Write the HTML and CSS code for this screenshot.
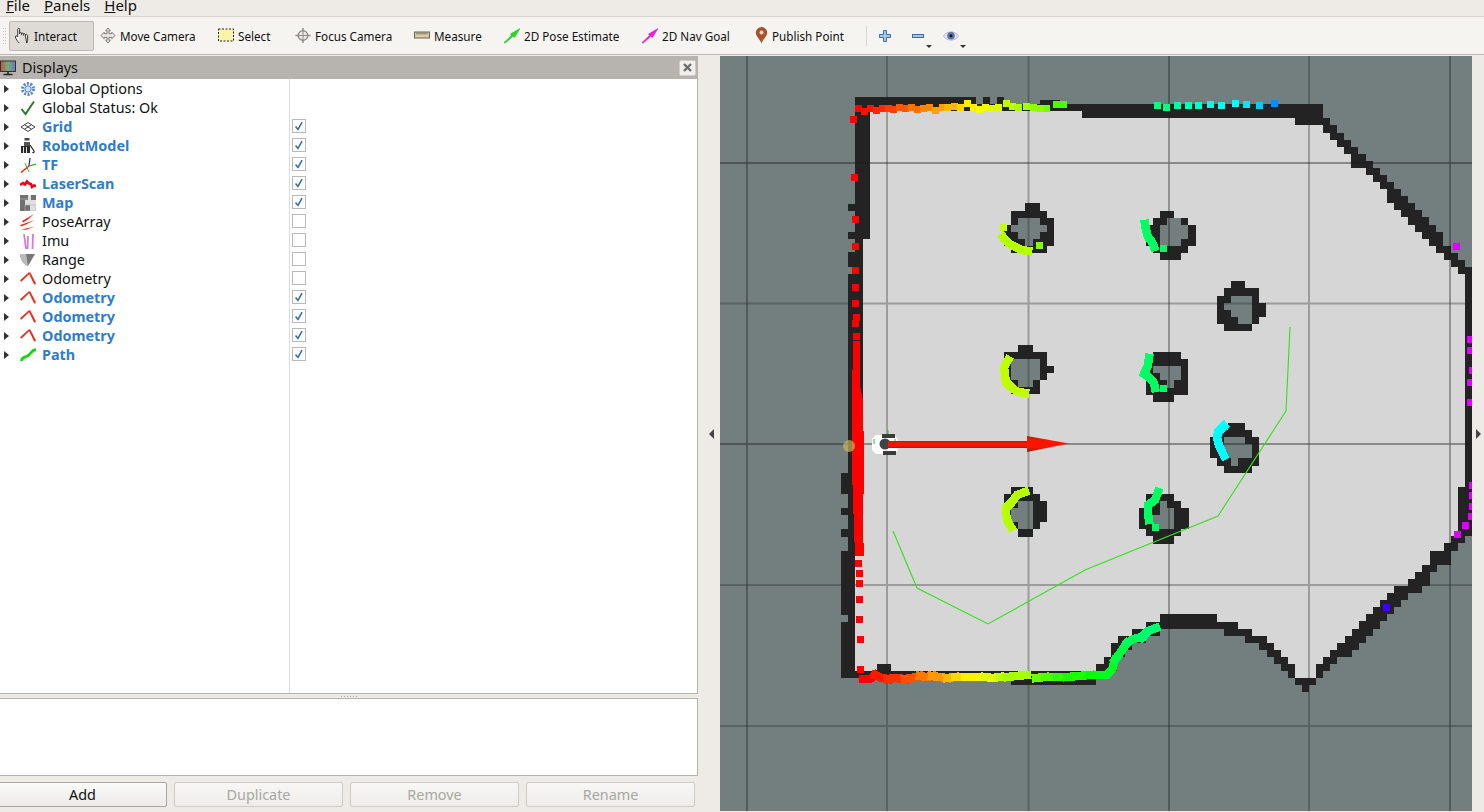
FILE: index.html
```html
<!DOCTYPE html>
<html lang="en">
<head>
<meta charset="utf-8">
<title>RViz</title>
<link rel="stylesheet" href="styles.css">
</head>
<body>
<svg class="defs" width="0" height="0">
  <defs>
    <symbol id="chk" viewBox="0 0 14 14"><path d="M3 7.500 5.800 11 10.600 2.600" fill="none" stroke="#2f6ea8" stroke-width="1.800"/></symbol>
    <symbol id="odom" viewBox="0 0 18 18"><path d="M0 10.500 10 1.500 10.500 3.500 1.500 12ZM9.500 2 11.500 1.500 18 14 16 15.500Z" fill="#e8301c"/></symbol>
    <linearGradient id="shaft" x1="0" y1="0" x2="0" y2="1"><stop offset="0" stop-color="#a82410"/><stop offset=".3" stop-color="#ff1400"/><stop offset=".7" stop-color="#ff1400"/><stop offset="1" stop-color="#8c2410"/></linearGradient>
    <linearGradient id="mon" x1="0" y1="0" x2="1" y2="0"><stop offset="0" stop-color="#c05050"/><stop offset=".5" stop-color="#70b070"/><stop offset="1" stop-color="#7070d0"/></linearGradient>
  </defs>
</svg>
<nav class="menubar"><span class="menu"><u>F</u>ile</span><span class="menu"><u>P</u>anels</span><span class="menu"><u>H</u>elp</span></nav>
<div class="toolbar">
  <div class="grip"></div>
  <div class="tool active t-interact">
    <svg class="ti" viewBox="0 0 16 18"><path d="M5 17C3.500 15 1.500 13 1 10.500 1 9 2.500 9 3.500 10.500V2.500C3.500 1 5.500 1 5.500 2.500V7.500M5.500 7C5.500 5.500 7.500 5.500 7.500 7V8.500M7.500 7.500C7.500 6 9.500 6 9.500 7.500V9M9.500 8C9.500 6.800 11.500 6.800 11.500 8V9M11.500 8.500C11.500 7.500 13.500 7.500 14 9V13C14 15 13.500 16 13 17Z" fill="#fff" stroke="#222" stroke-width="1"/></svg>
    <span>Interact</span>
  </div>
  <div class="tool t-move">
    <svg class="ti" viewBox="0 0 17 17"><path d="M8.500 .5 11 3.500H9.500V6.500H12.500V5L16 8.500 12.500 12V10.500H9.500V13.500H11L8.500 16.500 6 13.500H7.500V10.500H4.500V12L1 8.500 4.500 5V6.500H7.500V3.500H6Z" fill="#e9e7e3" stroke="#77736e"/></svg>
    <span>Move Camera</span>
  </div>
  <div class="tool t-select">
    <svg class="ti" viewBox="0 0 16 16"><rect x=".5" y="1.500" width="15" height="12" fill="#fbf3ab" stroke="#222" stroke-dasharray="2 1.500"/></svg>
    <span>Select</span>
  </div>
  <div class="tool t-focus">
    <svg class="ti" viewBox="0 0 17 17"><path d="M8.500 .5V16.500M.5 8.500H16.500" stroke="#8d8a85" stroke-width="1.500"/><circle cx="8.500" cy="8.500" r="5" fill="#eceae6" stroke="#8d8a85" stroke-width="1.500"/><path d="M8.500 4V13M4 8.500H13" stroke="#8d8a85"/></svg>
    <span>Focus Camera</span>
  </div>
  <div class="tool t-measure">
    <svg class="ti" viewBox="0 0 16 16"><rect x=".5" y="4.500" width="15" height="6" fill="#d9cf9d" stroke="#66635c"/><path d="M3 5V7M5 5V7M7 5V7M9 5V7M11 5V7M13 5V7" stroke="#66635c"/></svg>
    <span>Measure</span>
  </div>
  <div class="tool t-pose">
    <svg class="ti" viewBox="0 0 16 16"><path d="M0 15 7.500 8 6.500 6.500 16 1 10.500 10 9 8.800 1 15.800Z" fill="#1fe01f" stroke="#129612" stroke-width=".4"/></svg>
    <span>2D Pose Estimate</span>
  </div>
  <div class="tool t-nav">
    <svg class="ti" viewBox="0 0 16 16"><path d="M0 15 7.500 8 6.500 6.500 16 1 10.500 10 9 8.800 1 15.800Z" fill="#f01ee0" stroke="#a812a0" stroke-width=".4"/></svg>
    <span>2D Nav Goal</span>
  </div>
  <div class="tool t-point">
    <svg class="ti-pin" viewBox="0 0 13 17"><path d="M6.500 16.500C5 12 .8 9.500.8 5.800A5.700 5.700 0 0 1 12.200 5.800C12.200 9.500 8 12 6.500 16.500Z" fill="#a8512c"/><circle cx="6.500" cy="5.500" r="2" fill="#f3d9c8"/></svg>
    <span>Publish Point</span>
  </div>
  <div class="tsep"></div>
  <svg class="ticon i-plus" viewBox="0 0 12 12"><path d="M4.500.5H7.500V4.500H11.500V7.500H7.500V11.500H4.500V7.500H.5V4.500H4.500Z" fill="#a9c6e6" stroke="#3a6ea8"/></svg>
  <svg class="ticon i-minus" viewBox="0 0 12 12"><rect x=".5" y="4.500" width="11" height="3" fill="#a9c6e6" stroke="#3a6ea8"/></svg>
  <span class="drop d-minus"></span>
  <svg class="i-eye" viewBox="0 0 16 12"><path d="M.5 6C4 .5 12 .5 15.500 6 12 11.500 4 11.500 .5 6Z" fill="#e4e6ee" stroke="#b5b7c2"/><circle cx="8" cy="5.800" r="3.800" fill="#5f70b0"/><circle cx="8" cy="5.800" r="1.500" fill="#14162a"/></svg>
  <span class="drop d-eye"></span>
</div>
<main class="main">
  <section class="dock">
    <header class="dock-title">
      <svg class="mon" viewBox="0 0 16 16"><rect x=".5" y="1" width="15" height="10.500" fill="url(#mon)" stroke="#333"/><path d="M8 11.500V14M3.500 14.500H12.500" stroke="#222" stroke-width="1.500"/></svg>
      <span class="dock-name">Displays</span>
      <span class="dock-close"><svg viewBox="0 0 9 9"><path d="M1 1 8 8M8 1 1 8" stroke="#6e6c69" stroke-width="2.400"/></svg></span>
    </header>
    <div class="tree">
      <div class="names">
        <div class="row"><i class="tri"></i><svg class="ic" viewBox="0 0 16 16"><circle cx="8" cy="8" r="5.500" fill="none" stroke="#4f86cc" stroke-width="3" stroke-dasharray="2 1.450"/><circle cx="8" cy="8" r="3.200" fill="#cfe0f4" stroke="#4f86cc"/></svg><span>Global Options</span></div>
        <div class="row"><i class="tri"></i><svg class="ic" viewBox="0 0 16 16"><path d="M1.500 9 5.500 14 14 1.500" fill="none" stroke="#2b7a2b" stroke-width="2"/></svg><span>Global Status: Ok</span></div>
        <div class="row on"><i class="tri"></i><svg class="ic" viewBox="0 0 16 16"><path d="M8 3.500 15 8 8 12.500 1 8ZM4.500 5.700 11.500 10.200M11.500 5.700 4.500 10.200" fill="none" stroke="#444" stroke-width="1"/></svg><span>Grid</span></div>
        <div class="row on"><i class="tri"></i><svg class="ic" viewBox="0 0 16 16"><rect x="4.500" y="0" width="5" height="2.500" fill="#445"/><rect x="4" y="4" width="6" height="4" fill="#555"/><rect x="1" y="8" width="9" height="7" fill="#2a2a2a"/><path d="M10 7 14 13C14.500 15 13 15 12.500 14" fill="none" stroke="#333" stroke-width="1.300"/><path d="M3.500 9V15M6.500 9V15" stroke="#ddd"/></svg><span>RobotModel</span></div>
        <div class="row on"><i class="tri"></i><svg class="ic" viewBox="0 0 16 16"><path d="M9 9 10 1" stroke="#2222dd" stroke-width="1.300"/><path d="M9 9 16 7" stroke="#11bb11" stroke-width="1.300"/><path d="M9 9 1 15.500" stroke="#ee2211" stroke-width="1.500"/><path d="M5 6 9 15" stroke="#22bb22"/></svg><span>TF</span></div>
        <div class="row on"><i class="tri"></i><svg class="ic" viewBox="0 0 16 16"><path d="M0 9 3 7 5 8.500 7 5.500 9 7.500 11 8 12 11 14 9.500 16 10" fill="none" stroke="#f00010" stroke-width="2.600"/></svg><span>LaserScan</span></div>
        <div class="row on"><i class="tri"></i><svg class="ic" viewBox="0 0 16 16"><rect width="16" height="16" fill="#dedede"/><path d="M0 0H8V5H5V10H10V16H0ZM11 0H16V5H11Z" fill="#707070"/><path d="M5 10H16V16H5ZM0 4H8" fill="none" stroke="#bbb" stroke-width=".6"/></svg><span>Map</span></div>
        <div class="row"><i class="tri"></i><svg class="ic" viewBox="0 0 16 16"><path d="M2 7 14 0 8 5.500 3 8.500ZM0 11 15 6 6 10.500 1 12.500ZM1 15.500 15 12.500 6 15.800Z" fill="#ea2f18"/></svg><span>PoseArray</span></div>
        <div class="row"><i class="tri"></i><svg class="ic" viewBox="0 0 16 16"><path d="M4 1 6 16M8 3 7.500 16M13 1 12.500 16" fill="none" stroke="#d67ada" stroke-width="1.800"/></svg><span>Imu</span></div>
        <div class="row"><i class="tri"></i><svg class="ic" viewBox="0 0 16 16"><path d="M0 2H15L8 14C6 14 0 9 0 2Z" fill="#777"/><path d="M0 2H6L8 14C6 14 0 9 0 2Z" fill="#bbb"/></svg><span>Range</span></div>
        <div class="row"><i class="tri"></i><svg class="ic"><use href="#odom"/></svg><span>Odometry</span></div>
        <div class="row on"><i class="tri"></i><svg class="ic"><use href="#odom"/></svg><span>Odometry</span></div>
        <div class="row on"><i class="tri"></i><svg class="ic"><use href="#odom"/></svg><span>Odometry</span></div>
        <div class="row on"><i class="tri"></i><svg class="ic"><use href="#odom"/></svg><span>Odometry</span></div>
        <div class="row on"><i class="tri"></i><svg class="ic" viewBox="0 0 16 16"><path d="M1.500 14C2 9 6 11 9 8 11 6 12 3 16 2.500" fill="none" stroke="#10d810" stroke-width="2.800"/></svg><span>Path</span></div>
      </div>
      <div class="checks">
        <div class="crow"></div><div class="crow"></div>
        <div class="crow"><span class="box"><svg><use href="#chk"/></svg></span></div>
        <div class="crow"><span class="box"><svg><use href="#chk"/></svg></span></div>
        <div class="crow"><span class="box"><svg><use href="#chk"/></svg></span></div>
        <div class="crow"><span class="box"><svg><use href="#chk"/></svg></span></div>
        <div class="crow"><span class="box"><svg><use href="#chk"/></svg></span></div>
        <div class="crow"><span class="box"></span></div>
        <div class="crow"><span class="box"></span></div>
        <div class="crow"><span class="box"></span></div>
        <div class="crow"><span class="box"></span></div>
        <div class="crow"><span class="box"><svg><use href="#chk"/></svg></span></div>
        <div class="crow"><span class="box"><svg><use href="#chk"/></svg></span></div>
        <div class="crow"><span class="box"><svg><use href="#chk"/></svg></span></div>
        <div class="crow"><span class="box"><svg><use href="#chk"/></svg></span></div>
      </div>
    </div>
    <div class="splitter"><span class="dots"></span></div>
    <div class="helpbox"></div>
    <div class="buttons">
      <button class="btn">Add</button>
      <button class="btn" disabled>Duplicate</button>
      <button class="btn" disabled>Remove</button>
      <button class="btn" disabled>Rename</button>
    </div>
  </section>
  <div class="gutter"><i class="arrow-l"></i></div>
  <svg class="view" viewBox="720 56 752 755">
    <rect x="720" y="56" width="752" height="755" fill="#737f7f"/>
    <g class="cells">
      <path fill="#232323" d="M855 97H976V104H1323V118H1330V125H1337V133H1344V140H1351V147H1358V154H1366V161H1373V168H1380V175H1387V182H1394V189H1401V196H1408V203H1415V210H1422V217H1429V225H1436V232H1443V246H1451V253H1458V260H1465V267H1472V536H1465V543H1458V551H1451V565H1437V572H1430V586H1422V593H1408V600H1401V607H1394V614H1387V621H1380V629H1373V636H1366V643H1359V650H1352V657H1337V664H1330V671H1323V678H1316V685H1309V692H1302V685H1295V678H1288V671H1281V664H1274V657H1267V650H1259V643H1245V636H1224V629H1160V636H1146V643H1132V650H1125V657H1117V671H1110V678H1096V685H1011V678H841V622H848V615H841V551H848V537H841V529H848V515H841V508H848V494H841V473H848V274H855V267H848V252H855V239H848V232H855V211H848V204H855Z"/>
      <path fill="#d6d6d6" d="M870 111H1082V118H1295V125H1323V133H1330V140H1337V147H1344V154H1351V168H1366V175H1373V182H1380V189H1387V203H1394V210H1401V217H1408V225H1415V232H1422V239H1429V246H1436V253H1444V260H1451V267H1458V274H1465V482H1465V487H1458V536H1451V543H1444V551H1430V565H1422V572H1415V579H1408V586H1394V593H1387V600H1380V607H1373V614H1366V621H1359V629H1352V636H1345V643H1337V650H1330V657H1323V664H1316V678H1295V664H1288V657H1281V650H1274V643H1267V636H1252V629H1238V622H1217V614H1160V622H1146V629H1132V636H1118V643H1111V657H1104V664H1096V671H891V664H877V671H855V473H863V239H870Z"/>
      <path fill="#232323" d="M1295 111H1302V118H1295ZM1302 118H1309V125H1302Z"/>
      <path fill="#232323" d="M983 97H990V104H983ZM997 97H1004V104H997ZM1040 100H1060V104H1040Z"/>
      <!-- pillars -->
      <path fill="#232323" d="M1025 203H1040V211H1047V218H1054V246H1047V253H1011V246H1004V225H1011V211H1025Z"/>
      <path fill="#737f7f" d="M1018 218H1040V225H1047V232H1040V239H1033V246H1025V239H1018V232H1011V225H1018Z"/>
      <path fill="#232323" d="M1160 211H1174V218H1188V225H1196V246H1188V253H1181V260H1160V253H1153V246H1146V225H1153V218H1160Z"/>
      <path fill="#737f7f" d="M1167 218H1181V225H1188V239H1181V246H1160V225H1167Z"/>
      <path fill="#232323" d="M1231 281H1245V288H1259V303H1266V317H1259V324H1252V331H1224V324H1217V296H1224V288H1231Z"/>
      <path fill="#737f7f" d="M1231 296H1252V324H1238V317H1231V310H1224V303H1231Z"/>
      <path fill="#232323" d="M1018 345H1033V352H1047V366H1054V373H1047V380H1040V394H1011V387H1004V352H1018Z"/>
      <path fill="#737f7f" d="M1011 359H1040V380H1033V387H1018V380H1011Z"/>
      <path fill="#232323" d="M1153 352H1181V359H1188V395H1174V402H1153V395H1146V359H1153Z"/>
      <path fill="#737f7f" d="M1153 366H1181V380H1174V388H1167V380H1160V373H1153Z"/>
      <path fill="#232323" d="M1228 423H1245V430H1252V437H1259V466H1252V473H1224V466H1217V458H1210V437H1217V430H1228Z"/>
      <path fill="#737f7f" d="M1224 437H1245V444H1252V458H1238V466H1231V458H1224Z"/>
      <path fill="#232323" d="M1011 487H1033V494H1040V501H1047V522H1040V529H1033V537H1018V529H1011V522H1004V494H1011Z"/>
      <path fill="#737f7f" d="M1018 501H1033V529H1018V522H1011V508H1018Z"/>
      <path fill="#232323" d="M1146 494H1174V501H1181V508H1189V529H1181V536H1174V544H1153V536H1146V529H1139V508H1146Z"/>
      <path fill="#737f7f" d="M1160 501H1167V508H1174V529H1153V515H1160Z"/>
    </g>
    <g class="gridlines">
      <path class="g1" d="M747 56V811M1169 56V811M1450 56V811M720 163H1472M720 444H1472"/>
      <path class="g2" d="M887 56V811M1028.500 56V811M1309 56V811M720 303.500H1472M720 585H1472M720 726H1472"/>
    </g>
    <path class="route" d="M893 531 917 588 988 624 1085 570 1218 516 1286 411 1290 327"/>
    <!-- robot -->
    <path fill="#fff" d="M876 435H894L898 439V450L894 454H876L872 450V439Z"/>
    <path fill="#3c3c3c" d="M882 434H895V438H882ZM883 451H896V455H883Z"/>
    <circle cx="885" cy="444" r="5.500" fill="#3e4345"/>
    <path class="tick" d="M874 439V444M895 439V444M888 430V434"/>
    <!-- laser -->
    <g class="scan">
      <path class="wallred" d="M853 341H860V385L863 400 864 460 863 530 864 556H855L853 500 852 470 852 400Z"/>
      <path stroke="#ff0000" d="M853 119h.01M854 177h.01M855 219h.01M855 246h.01M855 270h.01M855 287h.01M855 303h.01M856 317h.01M855 323h.01M856 336h.01M858 563h.01M859 573h.01M859 583h.01M859 599h.01M859 619h.01M860 639h.01M860 669h.01M858 108h.01"/>
      <path stroke="#ff1000" d="M864 111h.01M870 108h.01"/><path stroke="#ff2800" d="M876 110h.01M882 108h.01"/><path stroke="#ff4000" d="M888 108h.01M893 109h.01"/><path stroke="#ff5800" d="M899 107h.01M905 108h.01"/><path stroke="#ff7000" d="M911 107h.01M917 109h.01"/><path stroke="#ff8800" d="M923 108h.01M929 107h.01"/><path stroke="#ffa000" d="M935 110h.01M942 107h.01"/><path stroke="#ffb800" d="M947 107h.01M954 106h.01"/><path stroke="#ffd800" d="M960 107h.01"/><path stroke="#fff000" d="M967 103h.01M973 107h.01"/><path stroke="#f4ff00" d="M979 109h.01M985 107h.01"/><path stroke="#e0ff00" d="M992 108h.01M998 107h.01"/><path stroke="#c0ff00" d="M1006 103h.01M1012 106h.01"/><path stroke="#a8ff00" d="M1018 107h.01M1026 106h.01"/><path stroke="#90ff00" d="M1033 107h.01M1039 108h.01"/><path stroke="#78ff00" d="M1046 108h.01"/><path stroke="#48ff00" d="M1056 104h.01M1063 104h.01"/>
      <path stroke="#00ff80" d="M1157 105h.01M1166 107h.01"/><path stroke="#00ffa0" d="M1177 105h.01"/><path stroke="#00ffb8" d="M1188 105h.01"/><path stroke="#00ffcc" d="M1198 105h.01"/><path stroke="#00ffe0" d="M1210 104h.01"/><path stroke="#00fff0" d="M1221 105h.01"/><path stroke="#00ffff" d="M1235 103h.01"/><path stroke="#00e8ff" d="M1246 104h.01"/><path stroke="#00ccff" d="M1259 105h.01"/><path stroke="#0090ff" d="M1274 103h.01"/>
      <path stroke="#e000ff" d="M1456 246h.01M1470 339h.01M1470 350h.01M1472 370h.01M1470 382h.01M1470 402h.01M1472 485h.01M1472 495h.01M1472 506h.01M1471 516h.01M1465 525h.01M1457 534h.01"/>
      <path stroke="#4000ff" d="M1386 607h.01"/>
      <path stroke="#ff0000" d="M863 679 870 679 875 675"/><path stroke="#ff1800" d="M875 675 882 678 888 679"/><path stroke="#ff3000" d="M888 679 895 678 905 679"/><path stroke="#ff5000" d="M905 679 912 678 920 676"/><path stroke="#ff7800" d="M920 676 926 677 932 676"/><path stroke="#ff9800" d="M932 676 939 677 947 678"/><path stroke="#ffb800" d="M947 678 955 677"/><path stroke="#ffd800" d="M955 677 965 677"/><path stroke="#fff000" d="M965 677 975 677 985 677"/><path stroke="#e0ff00" d="M985 677 993 678 1000 677"/><path stroke="#c0ff00" d="M1000 677 1008 677"/><path stroke="#a8ff00" d="M1008 677 1015 676 1027 675"/><path stroke="#70ff00" d="M1036 678 1045 677"/><path stroke="#50ff00" d="M1045 677 1057 677"/><path stroke="#30ff00" d="M1057 677 1067 677"/><path stroke="#18ff00" d="M1067 677 1078 676 1090 675"/><path stroke="#00ff00" d="M1090 675 1100 675"/><path stroke="#00ff20" d="M1100 675 1107 675 1112 670 1115 660"/><path stroke="#00ff40" d="M1115 660 1120 653 1127 643"/><path stroke="#00ff58" d="M1127 643 1133 639 1142 637"/><path stroke="#00ff70" d="M1142 637 1148 631 1156 628"/>
      <!-- arcs on pillars -->
      <path stroke="#c8ff00" d="M1003 227h.01"/>
      <path stroke="#b4ff00" d="M1003 237 1008 243 1015 247 1022 250 1028 251"/>
      <path stroke="#80ff00" class="thin" d="M1039 245h.01"/>
      <path stroke="#00ff60" d="M1145 224 1146 230 1148 237 1152 242 1154 247"/>
      <path stroke="#00ff60" d="M1163 248h.01"/>
      <path stroke="#c0ff00" d="M1008 360 1004 367 1005 375 1006 382 1012 388 1018 392 1025 393"/>
      <path stroke="#00ff60" d="M1149 358 1148 365 1144 374 1149 377 1154 383 1155 388"/>
      <path stroke="#00ff60" d="M1163 388h.01"/>
      <path stroke="#00ffff" d="M1224 426 1218 432 1217 438 1219 445 1222 452 1224 456"/>
      <path stroke="#b4ff00" d="M1025 492 1017 495 1012 502 1006 508 1006 515 1008 522 1011 527"/>
      <path stroke="#00ff60" d="M1158 492 1155 500 1148 505 1148 513 1149 520"/>
      <path stroke="#00ff60" d="M1155 527h.01"/>
    </g>
    <circle class="marker" cx="849" cy="446" r="6"/>
    <!-- axis arrow -->
    <rect x="888" y="441" width="140" height="7" fill="url(#shaft)"/>
    <path fill="url(#shaft)" d="M1027 436 1069 443.500 1027 452Z"/>
  </svg>
  <div class="gutter-r"><i class="arrow-r"></i></div>
</main>
</body>
</html>
```
FILE: styles.css
```css
* { box-sizing: border-box; }
html, body { margin: 0; padding: 0; }
body {
  width: 1484px;
  height: 812px;
  overflow: hidden;
  background: #eeebe7;
  font-family: "Noto Sans", "Open Sans", sans-serif;
  color: #111;
  display: flex;
  flex-direction: column;
}
.defs { position: absolute; }

.menubar {
  height: 17px;
  flex: none;
  display: flex;
  gap: 14px;
  padding-left: 6px;
  border-bottom: 1px solid #d9d6d0;
  overflow: hidden;
  font-size: 15px;
  line-height: 10px;
}
.menu { display: block; }

.toolbar {
  height: 38px;
  flex: none;
  display: flex;
  align-items: center;
  background: #f6f4f0;
  border-bottom: 1px solid #b9b6b1;
  font-size: 11.700px;
  padding-left: 2px;
  position: relative;
}
.grip {
  width: 4px;
  height: 17px;
  margin-right: 3px;
  background-image: radial-gradient(#b5b2ad 0.7px, transparent 0.8px);
  background-size: 2.500px 3px;
}
.tool {
  height: 30px;
  display: flex;
  align-items: center;
  gap: 4px;
  flex: none;
  white-space: nowrap;
}
.ti { width: 16px; height: 17px; flex: none; }
.ti-pin { width: 13px; height: 17px; flex: none; }
.active {
  background: #dedbd6;
  border: 1px solid #bcb9b4;
  border-radius: 2px;
}
.t-interact { width: 85px; padding-left: 4px; margin-right: 6px; }
.t-move { width: 118px; }
.t-select { width: 77px; }
.t-focus { width: 119px; }
.t-measure { width: 90px; }
.t-pose { width: 138px; }
.t-nav { width: 113px; }
.t-point { width: 91px; }
.tsep { width: 1px; height: 20px; background: #d9d6d1; margin: 0 12px 0 20px; flex: none; }
.ticon { width: 12px; height: 12px; flex: none; }
.i-plus { margin-right: 21px; }
.drop {
  width: 0;
  height: 0;
  border-left: 3px solid transparent;
  border-right: 3px solid transparent;
  border-top: 3px solid #333;
  align-self: flex-end;
  margin-bottom: 6px;
  flex: none;
}
.d-minus { margin: 0 11px 6px 2px; }
.i-eye { width: 16px; height: 12px; flex: none; margin-right: 0; }
.d-eye { margin-left: 1px; }

.main {
  flex: 1;
  display: flex;
  padding-top: 1px;
  min-height: 0;
}
.dock {
  width: 698px;
  flex: none;
  display: flex;
  flex-direction: column;
}
.dock-title {
  height: 23px;
  flex: none;
  background: #b7b3af;
  display: flex;
  align-items: center;
  font-size: 14.400px;
  position: relative;
}
.mon { width: 16px; height: 16px; margin-right: 6px; flex: none; }
.dock-name { flex: 1; }
.dock-close {
  width: 17px;
  height: 16px;
  margin-right: 2px;
  background: #f1efec;
  border: 1px solid #d0cdc9;
  border-radius: 2px;
  display: flex;
  align-items: center;
  justify-content: center;
}
.dock-close svg { width: 9px; height: 9px; }

.tree {
  height: 615px;
  flex: none;
  display: flex;
  background: #fff;
  border-right: 1px solid #b5b3af;
  border-bottom: 1px solid #b5b3af;
  font-size: 14.400px;
}
.names { width: 290px; border-right: 1px solid #dcdcdc; flex: none; }
.checks { flex: 1; }
.row, .crow { height: 19px; display: flex; align-items: center; }
.row span { white-space: nowrap; }
.tri {
  width: 0;
  height: 0;
  border-top: 4.500px solid transparent;
  border-bottom: 4.500px solid transparent;
  border-left: 5px solid #333;
  margin-left: 4px;
  margin-right: 11px;
  flex: none;
}
.ic { width: 16px; height: 16px; margin-right: 6px; flex: none; }
.on span { color: #2f7ccb; font-weight: 700; }
.crow { padding: 0 0 2px 2px; }
.box {
  width: 14px;
  height: 14px;
  border: 1px solid #b9b9b9;
  background: #fff;
  display: block;
}
.box svg { width: 12px; height: 12px; display: block; }

.splitter {
  height: 4px;
  flex: none;
  display: flex;
  justify-content: center;
  align-items: center;
}
.dots {
  width: 17px;
  height: 1px;
  background-image: linear-gradient(90deg, #a8a5a0 1px, transparent 1px);
  background-size: 3px 1px;
}
.helpbox {
  height: 78px;
  flex: none;
  background: #fff;
  border: 1px solid #b5b3af;
  border-left: 0;
}
.buttons {
  display: flex;
  gap: 7px;
  margin: 6px 0 0 -2px;
  flex: none;
}
.btn {
  width: 169px;
  height: 25px;
  flex: none;
  padding: 0;
  font: 14.400px "Noto Sans", "Open Sans", sans-serif;
  color: #111;
  background: linear-gradient(#fafafa, #ecebe8);
  border: 1px solid #a9a6a1;
  border-radius: 2px;
}
.btn:disabled {
  color: #a8a7a3;
  border-color: #cfccc8;
  background: linear-gradient(#f8f7f5, #efedea);
}

.gutter, .gutter-r {
  display: flex;
  align-items: center;
  justify-content: center;
  height: 755px;
  flex: none;
}
.gutter { width: 22px; padding-left: 4px; }
.gutter-r { width: 12px; }
.arrow-l, .arrow-r {
  width: 0;
  height: 0;
  border-top: 5px solid transparent;
  border-bottom: 5px solid transparent;
}
.arrow-l { border-right: 5px solid #444; }
.arrow-r { border-left: 5px solid #444; }

.view { width: 752px; height: 755px; flex: none; display: block; }
.cells { shape-rendering: crispEdges; }
.gridlines path { fill: none; }
.g1 { stroke: #1c1c1c; stroke-opacity: .55; stroke-width: 1.300; }
.g2 { stroke: #222; stroke-opacity: .32; stroke-width: 2; }
.route { fill: none; stroke: #35e01a; stroke-width: 1.100; }
.tick { fill: none; stroke: #22bb44; stroke-width: 1; }
.scan { shape-rendering: crispEdges; }
.scan path {
  fill: none;
  stroke-width: 8.500;
  stroke-linecap: square;
  stroke-linejoin: miter;
}
.scan path[d$="h.01"] { stroke-width: 7; }
.scan .wallred { fill: #ff0000; stroke: none; }
.scan .thin { stroke-width: 6; }
.marker { fill: #c8b45a; fill-opacity: .7; }
```
